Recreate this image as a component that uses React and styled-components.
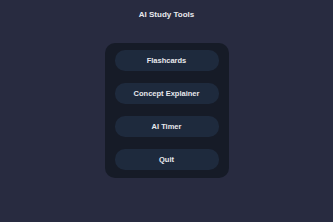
import styled, { createGlobalStyle } from "styled-components";

const GlobalStyle = createGlobalStyle`
  html, body {
    margin: 0;
    padding: 0;
    background: #282b40;
  }
  #root {
    min-height: 222px;
  }
`;

const Page = styled.main`
  min-height: 222px;
  display: flex;
  flex-direction: column;
  align-items: center;
  font-family: "Liberation Sans", Arial, sans-serif;
  color: #e8e9ee;
`;

const Title = styled.h1`
  margin: 10px 0 0;
  font-size: 8px;
  line-height: 10px;
  font-weight: 700;
`;

const Panel = styled.nav`
  margin-top: 23px;
  width: 124px;
  box-sizing: border-box;
  padding: 7px 10px 8px;
  background: #161b27;
  border-radius: 10px;
  display: flex;
  flex-direction: column;
  gap: 12.5px;
`;

const MenuButton = styled.button`
  height: 20.5px;
  border: none;
  border-radius: 10px;
  background: #1e2a3d;
  color: #e8e9ee;
  font-family: inherit;
  font-size: 7.5px;
  font-weight: 700;
  padding: 0;
  cursor: pointer;
`;

const items = ["Flashcards", "Concept Explainer", "AI Timer", "Quit"];

export default function App() {
  return (
    <>
      <GlobalStyle />
      <Page>
        <Title>AI Study Tools</Title>
        <Panel>
          {items.map((label) => (
            <MenuButton key={label}>{label}</MenuButton>
          ))}
        </Panel>
      </Page>
    </>
  );
}
